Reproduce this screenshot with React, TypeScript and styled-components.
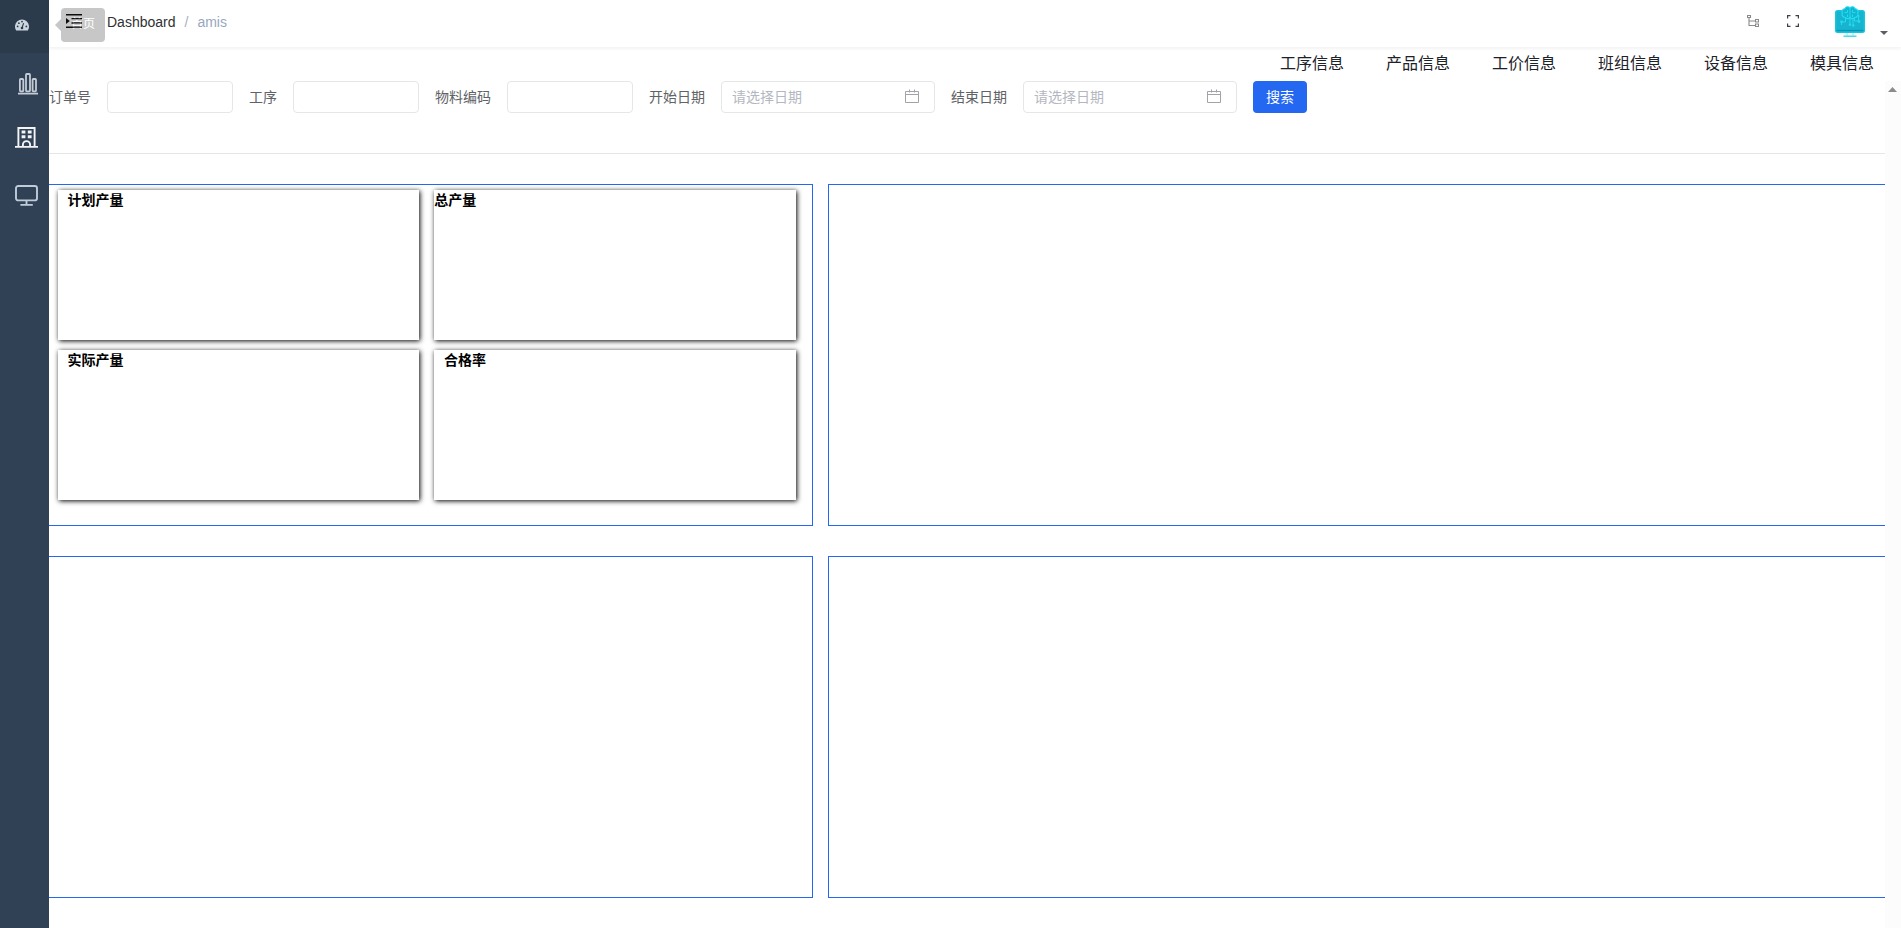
import React from 'react';
import styled, { createGlobalStyle } from 'styled-components';

const GlobalStyle = createGlobalStyle`
  * { box-sizing: border-box; }
  body {
    margin: 0;
    background: #fff;
    font-family: "Liberation Sans", "Noto Sans CJK SC", sans-serif;
    font-size: 14px;
    color: #1d2129;
    overflow: hidden;
  }
`;

const Page = styled.div`
  display: flex;
  height: 100vh;
  overflow: hidden;
`;

const Sidebar = styled.aside`
  flex: none;
  width: 49px;
  background: #304156;
  display: flex;
  flex-direction: column;
`;

const MenuItem = styled.a<{ $height: number; $left: number; $top: number; $active?: boolean }>`
  display: block;
  flex: none;
  height: ${(p) => p.$height}px;
  padding: ${(p) => p.$top}px 0 0 ${(p) => p.$left}px;
  background: ${(p) => (p.$active ? '#2c3b4c' : 'transparent')};
  svg { display: block; }
`;

const Main = styled.main`
  flex: 1;
  min-width: 0;
  display: flex;
  flex-direction: column;
`;

const Header = styled.header`
  position: relative;
  flex: none;
  height: 47px;
  display: flex;
  justify-content: space-between;
  box-shadow: 0 1px 4px rgba(0, 21, 41, 0.08);
`;

const HeaderLeft = styled.div`
  display: flex;
  padding-left: 16px;
`;

const FoldButton = styled.span`
  width: 18px;
  height: 16px;
  margin-top: 13px;
  svg { display: block; }
`;

const Tooltip = styled.div`
  position: absolute;
  left: 12px;
  top: 8px;
  width: 44px;
  height: 34px;
  padding-left: 10px;
  border-radius: 4px;
  background: #303133;
  opacity: 0.266;
  color: #fff;
  font-size: 12px;
  line-height: 33px;
  &::before {
    content: '';
    position: absolute;
    left: -6px;
    top: 11px;
    border: 6px solid transparent;
    border-left: 0;
    border-right-color: #303133;
  }
`;

const Breadcrumb = styled.nav`
  display: flex;
  gap: 9px;
  margin-left: 24px;
  line-height: 44px;
  color: #303133;
`;

const Separator = styled.span`
  color: #a8b0bd;
`;

const Current = styled.span`
  color: #97a8be;
`;

const HeaderRight = styled.div`
  display: flex;
  align-items: flex-start;
  padding-right: 13px;
  svg { display: block; }
`;

const HeaderIcon = styled.span<{ $top: number; $gap: number }>`
  margin-top: ${(p) => p.$top}px;
  margin-right: ${(p) => p.$gap}px;
`;

const LinkBar = styled.nav`
  flex: none;
  height: 34px;
  display: flex;
  justify-content: flex-end;
  gap: 42px;
  padding-right: 27px;
  font-size: 16px;
  line-height: 34px;
`;

const Body = styled.div`
  flex: 1;
  min-height: 0;
  display: flex;
`;

const Content = styled.div`
  flex: 1;
  min-width: 0;
  overflow: hidden;
`;

const ScrollTrack = styled.div`
  flex: none;
  width: 16px;
  background: #fcfcfc;
  padding: 6px 0 0 3px;
  svg { display: block; }
`;

const SearchForm = styled.form`
  display: flex;
  gap: 16px;
  height: 73px;
  border-bottom: 1px solid #e5e6e8;
`;

const Label = styled.label`
  color: #606266;
  line-height: 32px;
  white-space: nowrap;
`;

const Field = styled.div<{ $width: number }>`
  flex: none;
  display: flex;
  justify-content: space-between;
  width: ${(p) => p.$width}px;
  height: 32px;
  padding: 0 15px 0 10px;
  border: 1px solid #e5e6e8;
  border-radius: 4px;
  color: #b4b7bf;
  line-height: 30px;
  svg { display: block; margin-top: 7px; }
`;

const SearchButton = styled.button`
  width: 54px;
  height: 32px;
  padding: 0 0 2px;
  border: 0;
  border-radius: 4px;
  background: #2468f2;
  color: #fff;
  font: inherit;
`;

const PanelGrid = styled.section`
  display: grid;
  grid-template-columns: 764px 1120px;
  grid-auto-rows: 342px;
  gap: 30px 15px;
  padding-top: 30px;
`;

const Panel = styled.div<{ $openSide: 'left' | 'right' }>`
  border: 1px solid #2468f2;
  border-${(p) => p.$openSide}: 0;
`;

const CardPanel = styled(Panel)`
  display: grid;
  grid-template-columns: 361.3px 362.3px;
  grid-auto-rows: 150px;
  align-content: start;
  gap: 10px 14.7px;
  padding: 5px 0 0 9px;
`;

const Card = styled.article<{ $indent: number }>`
  padding-left: ${(p) => p.$indent}px;
  background: #fff;
  box-shadow: 1px 1px 5px #000;
  color: #000;
  font-weight: 700;
  line-height: 20px;
`;

const CalendarIcon = () => (
  <svg width="14" height="15" viewBox="0 0 14 15" fill="none" stroke="#a0a3a8">
    <path d="M.5 2.5h13v11H.5zM.5 5.500h13M4.500 .5v3M9.500 .5v3" />
  </svg>
);

const fields = [
  { label: '订单号' },
  { label: '工序' },
  { label: '物料编码' },
  { label: '开始日期', date: true },
  { label: '结束日期', date: true },
];

const links = ['工序信息', '产品信息', '工价信息', '班组信息', '设备信息', '模具信息'];

const cards = [
  { title: '计划产量', indent: 9.5 },
  { title: '总产量', indent: 0.3 },
  { title: '实际产量', indent: 9.5 },
  { title: '合格率', indent: 10 },
];

export default function App() {
  return (
    <>
      <GlobalStyle />
      <Page>
        <Sidebar>
          <MenuItem $height={53} $left={15} $top={19} $active>
            <svg width="14" height="12" viewBox="0 0 14 12">
              <path d="M1.2 11.5A7 7 0 1 1 12.8 11.5Z" fill="#cbd5e0" />
              <g fill="#2c3b4c">
                <circle cx="2.6" cy="7.4" r=".9" />
                <circle cx="3.9" cy="4.2" r=".9" />
                <circle cx="7" cy="2.6" r=".9" />
                <circle cx="11.4" cy="7.4" r=".9" />
                <circle cx="7" cy="9" r="1.3" />
              </g>
              <path d="M7 9 8.6 4.2" stroke="#2c3b4c" strokeWidth="1.1" />
            </svg>
          </MenuItem>
          <MenuItem $height={60} $left={18} $top={20}>
            <svg width="20" height="22" viewBox="0 0 20 22" fill="none" stroke="#c3cbd5" strokeWidth="1.8">
              <rect x="1.9" y="6" width="3.4" height="12.3" rx=".8" />
              <rect x="8" y="1" width="4" height="17.3" rx=".8" />
              <rect x="14.6" y="6" width="3.4" height="12.3" rx=".8" />
              <path d="M0 20.6h20" />
            </svg>
          </MenuItem>
          <MenuItem $height={60} $left={15} $top={14}>
            <svg width="23" height="21" viewBox="0 0 23 21" fill="none" stroke="#f4f4f5" strokeWidth="1.9">
              <path d="M3.4 20V1h16.2V20M0 19.9h23M7.9 20v-2.2a3.6 3.7 0 0 1 7.2 0V20" />
              <path d="M6.6 5h3.8M12.8 5h3.8M6.6 9.7h3.8M12.8 9.7h3.8" strokeWidth="3.1" />
            </svg>
          </MenuItem>
          <MenuItem $height={60} $left={15} $top={12}>
            <svg width="23" height="21" viewBox="0 0 23 21" fill="none" stroke="#bfcbd9" strokeWidth="1.9">
              <rect x="1" y="1" width="21" height="14.4" rx="2.2" />
              <path d="M11.5 15.4V20M5.4 19.9h12.4" />
            </svg>
          </MenuItem>
        </Sidebar>
        <Main>
          <Header>
            <HeaderLeft>
              <FoldButton>
                <svg width="18" height="16" viewBox="0 0 18 16">
                  <path d="M1 1.7h16M6.5 5.8H17M6.5 10H17M1 14.3h16" stroke="#000" strokeWidth="1.5" />
                  <path d="M1 5v6l3.8-3z" fill="#000" />
                </svg>
              </FoldButton>
              <Tooltip>首页</Tooltip>
              <Breadcrumb>
                <span>Dashboard</span>
                <Separator>/</Separator>
                <Current>amis</Current>
              </Breadcrumb>
            </HeaderLeft>
            <HeaderRight>
              <HeaderIcon $top={15} $gap={28}>
                <svg width="12" height="12" viewBox="0 0 12 12" fill="none" stroke="#8a8a8a" strokeWidth="1.1">
                  <path d="M.5.5h3v2h-3zM8.5 4.5h3v2.5h-3zM8.5 9h3v2.5h-3zM2 2.5v8h6M2 6h6" />
                </svg>
              </HeaderIcon>
              <HeaderIcon $top={15} $gap={36}>
                <svg width="12" height="12" viewBox="0 0 12 12" fill="none" stroke="#3c4048" strokeWidth="1.2">
                  <path d="M.6 3.5V.6h2.9M8.5.6h2.9v2.9M11.4 8.5v2.9H8.5M3.5 11.4H.6V8.5" />
                </svg>
              </HeaderIcon>
              <HeaderIcon $top={6} $gap={15}>
                <svg width="30" height="31" viewBox="0 0 30 31" fill="none">
                  <rect x="0" y="4" width="30" height="23" rx="2.5" fill="#10c8e0" />
                  <path d="M1.5 5.5h27v18h-27z" fill="#19b3cf" />
                  <path d="M8.5 30.2h13" stroke="#35d8ec" strokeWidth="1.4" />
                  <path d="M12 27v3M18 27v3" stroke="#7de6f2" />
                  <path d="M1.5 24.5h27" stroke="#0c93b0" strokeWidth="1.6" />
                  <path d="M15 1.8C13.5.2 10.5.4 10 2.6 7.5 3 6.5 5 7.3 7c-.8 2.5.7 4.5 3 4.5 1.5 1.5 3.5 1.3 4.7 0 1.2 1.3 3.2 1.5 4.7 0 2.3 0 3.8-2 3-4.5.8-2-.2-4-2.7-4.4C19.5.4 16.5.2 15 1.8z" fill="#12b5d2" stroke="#22dcee" strokeWidth="1.2" />
                  <path d="M15 1.5v17M12.5 4v2.5h-3M17.5 4v2.5h3M12.5 11V8.5M17.5 11V8.5M10.5 12v4H6.5v3M19.5 12v3h4v-5M18 12v7" stroke="#22dcee" />
                  <g fill="#22dcee">
                    <circle cx="15" cy="18.8" r="1.2" />
                    <circle cx="6.5" cy="15.8" r="1.4" />
                    <circle cx="18.3" cy="19.5" r="1.2" />
                    <circle cx="24" cy="15.5" r="1.4" />
                    <circle cx="23.5" cy="10" r="1.1" />
                  </g>
                </svg>
              </HeaderIcon>
              <HeaderIcon $top={31} $gap={0}>
                <svg width="8" height="4" viewBox="0 0 8 4"><path d="M0 0h8L4 4z" fill="#5a5e66" /></svg>
              </HeaderIcon>
            </HeaderRight>
          </Header>
          <LinkBar>
            {links.map((text) => <span key={text}>{text}</span>)}
          </LinkBar>
          <Body>
            <Content>
              <SearchForm>
                {fields.map((f) => (
                  <React.Fragment key={f.label}>
                    <Label>{f.label}</Label>
                    <Field $width={f.date ? 214 : 126}>
                      {f.date && <><span>请选择日期</span><CalendarIcon /></>}
                    </Field>
                  </React.Fragment>
                ))}
                <SearchButton type="button">搜索</SearchButton>
              </SearchForm>
              <PanelGrid>
                <CardPanel $openSide="left">
                  {cards.map((c) => <Card key={c.title} $indent={c.indent}>{c.title}</Card>)}
                </CardPanel>
                <Panel $openSide="right" />
                <Panel $openSide="left" />
                <Panel $openSide="right" />
              </PanelGrid>
            </Content>
            <ScrollTrack>
              <svg width="9" height="5" viewBox="0 0 9 5"><path d="M0 5h9L4.5 0z" fill="#8b8b8b" /></svg>
            </ScrollTrack>
          </Body>
        </Main>
      </Page>
    </>
  );
}
